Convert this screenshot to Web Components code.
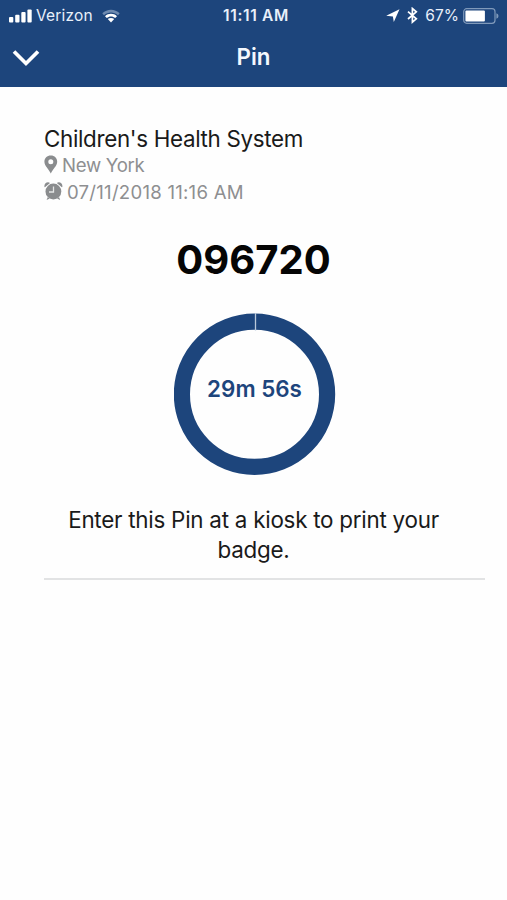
<!DOCTYPE html>
<html lang="en">
<head>
<meta charset="utf-8">
<title>Pin</title>
<style>
html,body{margin:0;height:100%}
body{background:#fefefe;color:#1a1a1a;font-family:Inter,"Liberation Sans",sans-serif;--navy:#1d457c;overflow:hidden}
</style>
</head>
<body>
<pin-screen></pin-screen>
<script>
function define(name, html) {
  const template = document.createElement('template');
  template.innerHTML = html;
  customElements.define(name, class extends HTMLElement {
    constructor() {
      super();
      this.attachShadow({ mode: 'open' }).append(template.content.cloneNode(true));
    }
  });
}

define('status-bar', `
<style>
:host{display:grid;grid-template-columns:1fr auto 1fr;align-items:center;height:30px;color:#e9f0fa;font-size:15.5px;line-height:30px;white-space:nowrap}
div{display:flex;align-items:center}
svg{display:block;flex:none}
span{padding-top:1px}
.left{padding-left:9px}
.carrier{margin:0 9px 0 4px;letter-spacing:.2px}
.time{font-weight:600;letter-spacing:.65px;padding-left:5px}
.right{justify-content:flex-end;padding-right:8px}
.pct{margin:0 4px 0 7px;letter-spacing:.05px}
</style>
<div class="left">
  <svg width="23" height="14" viewBox="0 0 23 14" fill="#fff"><rect y="8" width="4.3" height="5.6" rx="1"/><rect x="6.2" y="5.7" width="4.3" height="7.9" rx="1"/><rect x="12.3" y="3" width="4.3" height="10.6" rx="1"/><rect x="18.4" y=".4" width="4.3" height="13.2" rx="1"/></svg>
  <span class="carrier">Verizon</span>
  <svg width="18" height="14" viewBox="0 0 18 14"><path d="M.3 4.3C5.2-.6 12.8-.6 17.7 4.3L16 6.2C12.1 2.5 5.9 2.5 2 6.2Z" fill="#6f8bb0"/><path d="M3 7.2C6.4 4 11.6 4 15 7.2L13.2 9.1C10.9 7 7.1 7 4.8 9.1Z" fill="#fff"/><path d="M5.8 10.1C7.5 8.5 10.5 8.5 12.2 10.1L9 13.4Z" fill="#fff"/></svg>
</div>
<span class="time">11:11 AM</span>
<div class="right">
  <svg width="14" height="13" viewBox="0 0 14 13" fill="#fff"><path d="M13.5.2 7.8 12.9 6.900 7.4.2 6.7Z"/></svg>
  <svg width="11" height="17" viewBox="0 0 11 17" style="margin-left:7px"><path d="M1 4.6 9.3 11.8 5.4 15.100V1.5L9.3 4.800 1 12" fill="none" stroke="#fff" stroke-width="1.7"/></svg>
  <span class="pct">67%</span>
  <svg width="36" height="16" viewBox="0 0 36 16"><rect x=".7" y=".7" width="31.3" height="14.6" rx="3" fill="none" stroke="#7f99ba" stroke-width="1.2"/><rect x="2.4" y="2.5" width="19.5" height="11" rx="1" fill="#fff"/><path d="M33.4 5.2q2.1.6 2.1 2.8t-2.1 2.8Z" fill="#7f99ba"/></svg>
</div>`);

define('nav-bar', `
<style>
:host{display:grid;grid-template-columns:44px 1fr 44px;align-items:center;height:54px;padding-bottom:3px;color:#f4f8fe}
svg{display:block;margin:1px 0 0 12px}
.title{text-align:center;font-size:22.3px;font-weight:600;line-height:54px}
</style>
<svg width="28" height="18" viewBox="0 0 28 18"><path d="M2 2.500 14 14.5 26 2.500" fill="none" stroke="#fff" stroke-width="3.7"/></svg>
<span class="title"><slot></slot></span>`);

define('detail-row', `
<style>
:host{display:flex;align-items:center;height:27px;line-height:27px;color:#8e8f91;font-size:18.6px;white-space:nowrap}
::slotted(svg){display:block;flex:none}
</style>
<slot name="icon"></slot><span><slot></slot></span>`);

define('countdown-ring', `
<style>
:host{display:grid;place-items:center;width:162px;height:162px;color:var(--navy)}
svg,span{grid-area:1/1}
span{font-size:22.4px;font-weight:600;line-height:30px;padding-bottom:10px;white-space:nowrap}
</style>
<svg width="162" height="162" viewBox="0 0 162 162"><circle cx="80.500" cy="81.300" r="72.6" fill="none" stroke="#1d457c" stroke-width="16.2"/><path d="M81.5 0V17.500" stroke="#b9c8da" stroke-width="1.3"/></svg>
<span><slot></slot></span>`);

define('pin-screen', `
<style>
:host{display:block}
header{background:var(--navy);height:87px}
main{margin:0 22px 0 44px;padding-top:37px}
h1{margin:0;font-size:22.4px;font-weight:400;line-height:30px;height:28px;white-space:nowrap;letter-spacing:-.33px}
.code{text-align:center;font-size:40px;font-weight:700;line-height:50px;color:#050505;margin:29px 22px 0 0}
countdown-ring{margin:28px 0 0 129.5px}
p{margin:30px 22px 0 0;text-align:center;font-size:22.4px;line-height:29.5px;padding-bottom:14px;letter-spacing:-.25px}
.rule{height:2px;background:#e2e3e4}
</style>
<header><status-bar></status-bar><nav-bar>Pin</nav-bar></header>
<main>
  <h1>Children's Health System</h1>
  <detail-row style="letter-spacing:-.3px">
    <svg slot="icon" width="14" height="19" viewBox="0 0 14 19" style="margin:0 4px 3px 0"><path fill="#8a8c8e" fill-rule="evenodd" d="M6.8.5C3 .5.4 3.2.4 6.7c0 4 4.6 7.7 6.4 11.8 1.8-4.1 6.4-7.8 6.4-11.8C13.2 3.2 10.6.5 6.8.5ZM6.8 4.300a2.5 2.5 0 1 1 0 5 2.5 2.5 0 0 1 0-5Z"/></svg>New York</detail-row>
  <detail-row style="letter-spacing:.24px">
    <svg slot="icon" width="19" height="20" viewBox="0 0 19 20" style="margin:0 4px 3px 0"><g fill="#8a8c8e"><circle cx="9.4" cy="10.5" r="7.9"/><path d="M.5 5.900C-.3 2.700 3.400-.1 6 2L.9 6.300ZM18.300 5.900C19.100 2.700 15.400-.1 12.800 2l5.100 4.300ZM2.600 18.900l1.200-3 2 1.600ZM16.200 18.900l-1.200-3-2 1.600Z"/></g><path d="M9.500 5.400V11H5" fill="none" stroke="#e4e5e5" stroke-width="1.300"/></svg>07/11/2018 11:16 AM</detail-row>
  <div class="code">096720</div>
  <countdown-ring>29m 56s</countdown-ring>
  <p>Enter this Pin at a kiosk to print your<br>badge.</p>
  <div class="rule"></div>
</main>`);
</script>
</body>
</html>
